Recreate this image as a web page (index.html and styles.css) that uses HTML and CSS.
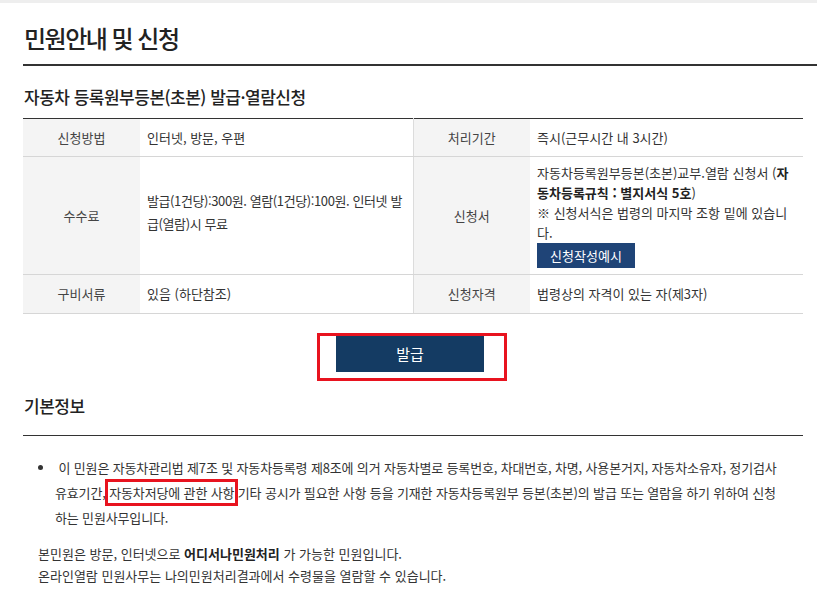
FILE: index.html
```html
<!DOCTYPE html>
<html lang="ko">
<head>
<meta charset="utf-8">
<title>민원안내 및 신청</title>
<link rel="stylesheet" href="styles.css">
</head>
<body>
<div class="topband"></div>
<main class="page">
  <h1 class="page-title">민원안내 및 신청</h1>
  <div class="content">
    <h2 class="sub-title">자동차 등록원부등본(초본) 발급·열람신청</h2>
    <table class="info">
      <colgroup>
        <col class="c-th"><col class="c-td"><col class="c-th"><col class="c-td">
      </colgroup>
      <tr class="r1">
        <th>신청방법</th>
        <td>인터넷, 방문, 우편</td>
        <th>처리기간</th>
        <td>즉시(근무시간 내 3시간)</td>
      </tr>
      <tr class="r2">
        <th>수수료</th>
        <td class="fee">발급(1건당):300원. 열람(1건당):100원. 인터넷 발급(열람)시 무료</td>
        <th>신청서</th>
        <td class="form">자동차등록원부등본(초본)교부.열람 신청서 (<b>자동차등록규칙 : 별지서식 5호</b>)<br>※ 신청서식은 법령의 마지막 조항 밑에 있습니다.<br><span class="btn-small">신청작성예시</span></td>
      </tr>
      <tr class="r3">
        <th>구비서류</th>
        <td>있음 (하단참조)</td>
        <th>신청자격</th>
        <td>법령상의 자격이 있는 자(제3자)</td>
      </tr>
    </table>
    <div class="action">
      <div class="hl-box"><span class="btn-main">발급</span></div>
    </div>
    <h2 class="section-title">기본정보</h2>
    <ul class="desc">
      <li>&nbsp;이 민원은 자동차관리법 제7조 및 자동차등록령 제8조에 의거 자동차별로 등록번호, 차대번호, 차명, 사용본거지, 자동차소유자, 정기검사 유효기간, <span class="hl-inline">자동차저당에 관한 사항</span> 기타 공시가 필요한 사항 등을 기재한 자동차등록원부 등본(초본)의 발급 또는 열람을 하기 위하여 신청하는 민원사무입니다.</li>
    </ul>
    <p class="note">본민원은 방문, 인터넷으로 <b>어디서나민원처리</b> 가 가능한 민원입니다.<br>온라인열람 민원사무는 나의민원처리결과에서 수령물을 열람할 수 있습니다.</p>
  </div>
</main>
</body>
</html>
```
FILE: styles.css
```css
* { box-sizing: border-box; }
html, body { margin: 0; padding: 0; background: #fff; }
body {
  font-family: "Noto Sans CJK KR", "Noto Sans", sans-serif;
  color: #333;
  font-size: 13px;
  overflow: hidden;
}
.topband { height: 3px; background: #eeeeee; }
.page { padding-left: 23px; }
.page-title {
  margin: 0;
  padding-top: 18px;
  height: 63px;
  font-size: 24px;
  font-weight: 500;
  line-height: 34px;
  letter-spacing: -1.5px;
  color: #222;
  padding-left: 1px;
  border-bottom: 2px solid #333;
}
.content { width: 780px; }
.sub-title {
  margin: 0;
  padding-top: 18px;
  height: 52px;
  font-size: 17px;
  font-weight: 500;
  line-height: 26px;
  letter-spacing: -0.5px;
  color: #222;
  padding-left: 1px;
}
.info {
  width: 780px;
  border-collapse: collapse;
  border-top: 1px solid #333;
  border-bottom: 1px solid #333;
  table-layout: fixed;
}
.c-th { width: 117px; }
.c-td { width: 273px; }
.info th, .info td {
  border-bottom: 1px solid #d6d6d6;
  font-weight: normal;
  padding: 0 7px;
  vertical-align: middle;
  line-height: 20px;
}
.info th {
  background: #f4f4f4;
  color: #444;
  text-align: center;
}
.info td { text-align: left; color: #333; word-break: break-all; }
.info tr td:nth-of-type(1) { border-right: 1px solid #dcdcdc; }
.r1 th, .r1 td { height: 38px; }
.r2 th, .r2 td { height: 118px; }
.r3 th, .r3 td { height: 39px; }
.info .fee {
  line-height: 23px;
  padding-right: 8px;
  padding-bottom: 8px;
  letter-spacing: -0.4px;
}
.info .form { padding-top: 6px; padding-bottom: 6px; padding-right: 5px; }
.form b { font-weight: bold; color: #222; }
.btn-small {
  display: inline-block;
  width: 98px;
  height: 25px;
  line-height: 25px;
  background: #1f4477;
  color: #fff;
  text-align: center;
  font-size: 13px;
  vertical-align: top;
}
.action {
  display: flex;
  justify-content: center;
  padding-top: 19px;
  height: 70px;
  margin-left: -2px;
}
.hl-box {
  border: 3px solid #e8131f;
  width: 190px;
  height: 48px;
  padding: 0 17px 0 16px;
}
.btn-main {
  display: block;
  width: 148px;
  height: 36px;
  line-height: 36px;
  background: #143b63;
  color: #fff;
  text-align: center;
  font-size: 15px;
}
.section-title {
  margin: 0;
  padding-top: 10px;
  height: 52px;
  font-size: 17px;
  font-weight: 500;
  line-height: 24px;
  letter-spacing: -0.5px;
  color: #222;
  padding-left: 1px;
  border-bottom: 1px solid #333;
}
.desc {
  margin: 0;
  padding: 19px 0 0 32px;
  list-style: disc;
  line-height: 25px;
  letter-spacing: -0.15px;
  width: 762px;
}
.hl-inline {
  outline: 3px solid #e8131f;
  outline-offset: 1px;
}
.note {
  margin: 0;
  padding-top: 13px;
  padding-left: 15px;
  line-height: 22px;
}
.note b { color: #222; }
```
